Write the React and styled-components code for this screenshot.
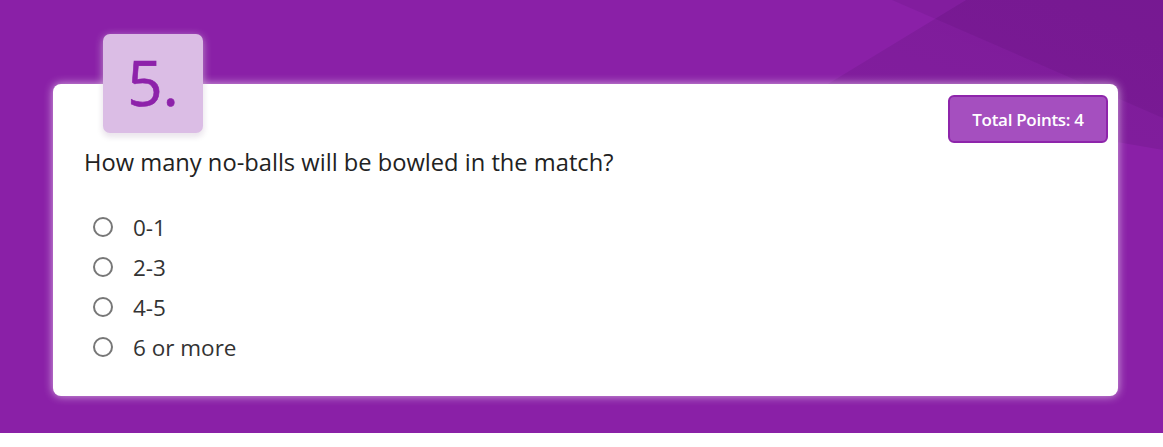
import styled, { createGlobalStyle } from 'styled-components'

const GlobalStyle = createGlobalStyle`
    body {
        margin: 0;
        background: #ffffff;
        font-family: "Open Sans", "Liberation Sans", sans-serif;
    }
`

const options = ['0-1', '2-3', '4-5', '6 or more']

//クイズの問題カード
export default function App() {
    return (
        <>
            <GlobalStyle />
            <Stage>
                <Card>
                    <Badge>5.</Badge>
                    <Points>Total Points: 4</Points>
                    <Question>How many no-balls will be bowled in the match?</Question>
                    <Options>
                        {options.map((o) => (
                            <Option key={o}>
                                <Radio />
                                <span>{o}</span>
                            </Option>
                        ))}
                    </Options>
                </Card>
            </Stage>
        </>
    )
}

const Stage = styled.section`
    position: relative;
    overflow: hidden;
    height: 433px;
    box-sizing: border-box;
    padding: 84px 0 0 53px;
    background: #8a20a7;

    /* 右上の斜めの模様 */
    &::before {
        content: '';
        position: absolute;
        inset: 0;
        background: linear-gradient(200deg, rgba(40, 0, 60, 0.13), rgba(40, 0, 60, 0.04) 60%);
        clip-path: polygon(818px 90px, 966px 0, 1163px 0, 1163px 150px);
    }
    &::after {
        content: '';
        position: absolute;
        inset: 0;
        background: rgba(40, 0, 60, 0.08);
        clip-path: polygon(892px 0, 1163px 0, 1163px 118px);
    }
`

const Card = styled.div`
    position: relative;
    z-index: 1;
    width: 1065px;
    height: 312px;
    box-sizing: border-box;
    padding: 62px 0 0 31px;
    background: #ffffff;
    border-radius: 8px;
    box-shadow: 0 0 10px rgba(255, 255, 255, 0.65);
`

const Badge = styled.div`
    position: absolute;
    left: 50px;
    top: -50px;
    width: 100px;
    height: 99px;
    display: flex;
    align-items: center;
    justify-content: center;
    background: #dbbde5;
    border-radius: 7px;
    box-shadow: 0 2px 8px rgba(255, 255, 255, 0.55), 0 3px 6px rgba(60, 0, 80, 0.18);
    color: #8d22aa;
    font-size: 62px;
    font-weight: 400;
    -webkit-text-stroke: 0.6px #8d22aa;
    line-height: 1;
    padding-bottom: 4px;
    box-sizing: border-box;
`

const Points = styled.div`
    position: absolute;
    top: 11px;
    right: 10px;
    width: 160px;
    height: 48px;
    box-sizing: border-box;
    display: flex;
    align-items: center;
    justify-content: center;
    background: #a54fbf;
    border: 2px solid #8e25ab;
    border-radius: 6px;
    color: #ffffff;
    font-size: 17px;
    font-weight: 600;
    letter-spacing: -0.3px;
`

const Question = styled.p`
    margin: 0;
    font-size: 23.7px;
    line-height: 32px;
    color: #222222;
`

const Options = styled.ul`
    list-style: none;
    margin: 29px 0 0;
    padding: 0 0 0 9px;
`

const Option = styled.li`
    display: flex;
    align-items: center;
    height: 40px;
    gap: 20px;
    font-size: 22.5px;
    color: #333333;
`

const Radio = styled.span`
    width: 20px;
    height: 20px;
    box-sizing: border-box;
    border: 2px solid #777777;
    border-radius: 50%;
    flex-shrink: 0;
`
